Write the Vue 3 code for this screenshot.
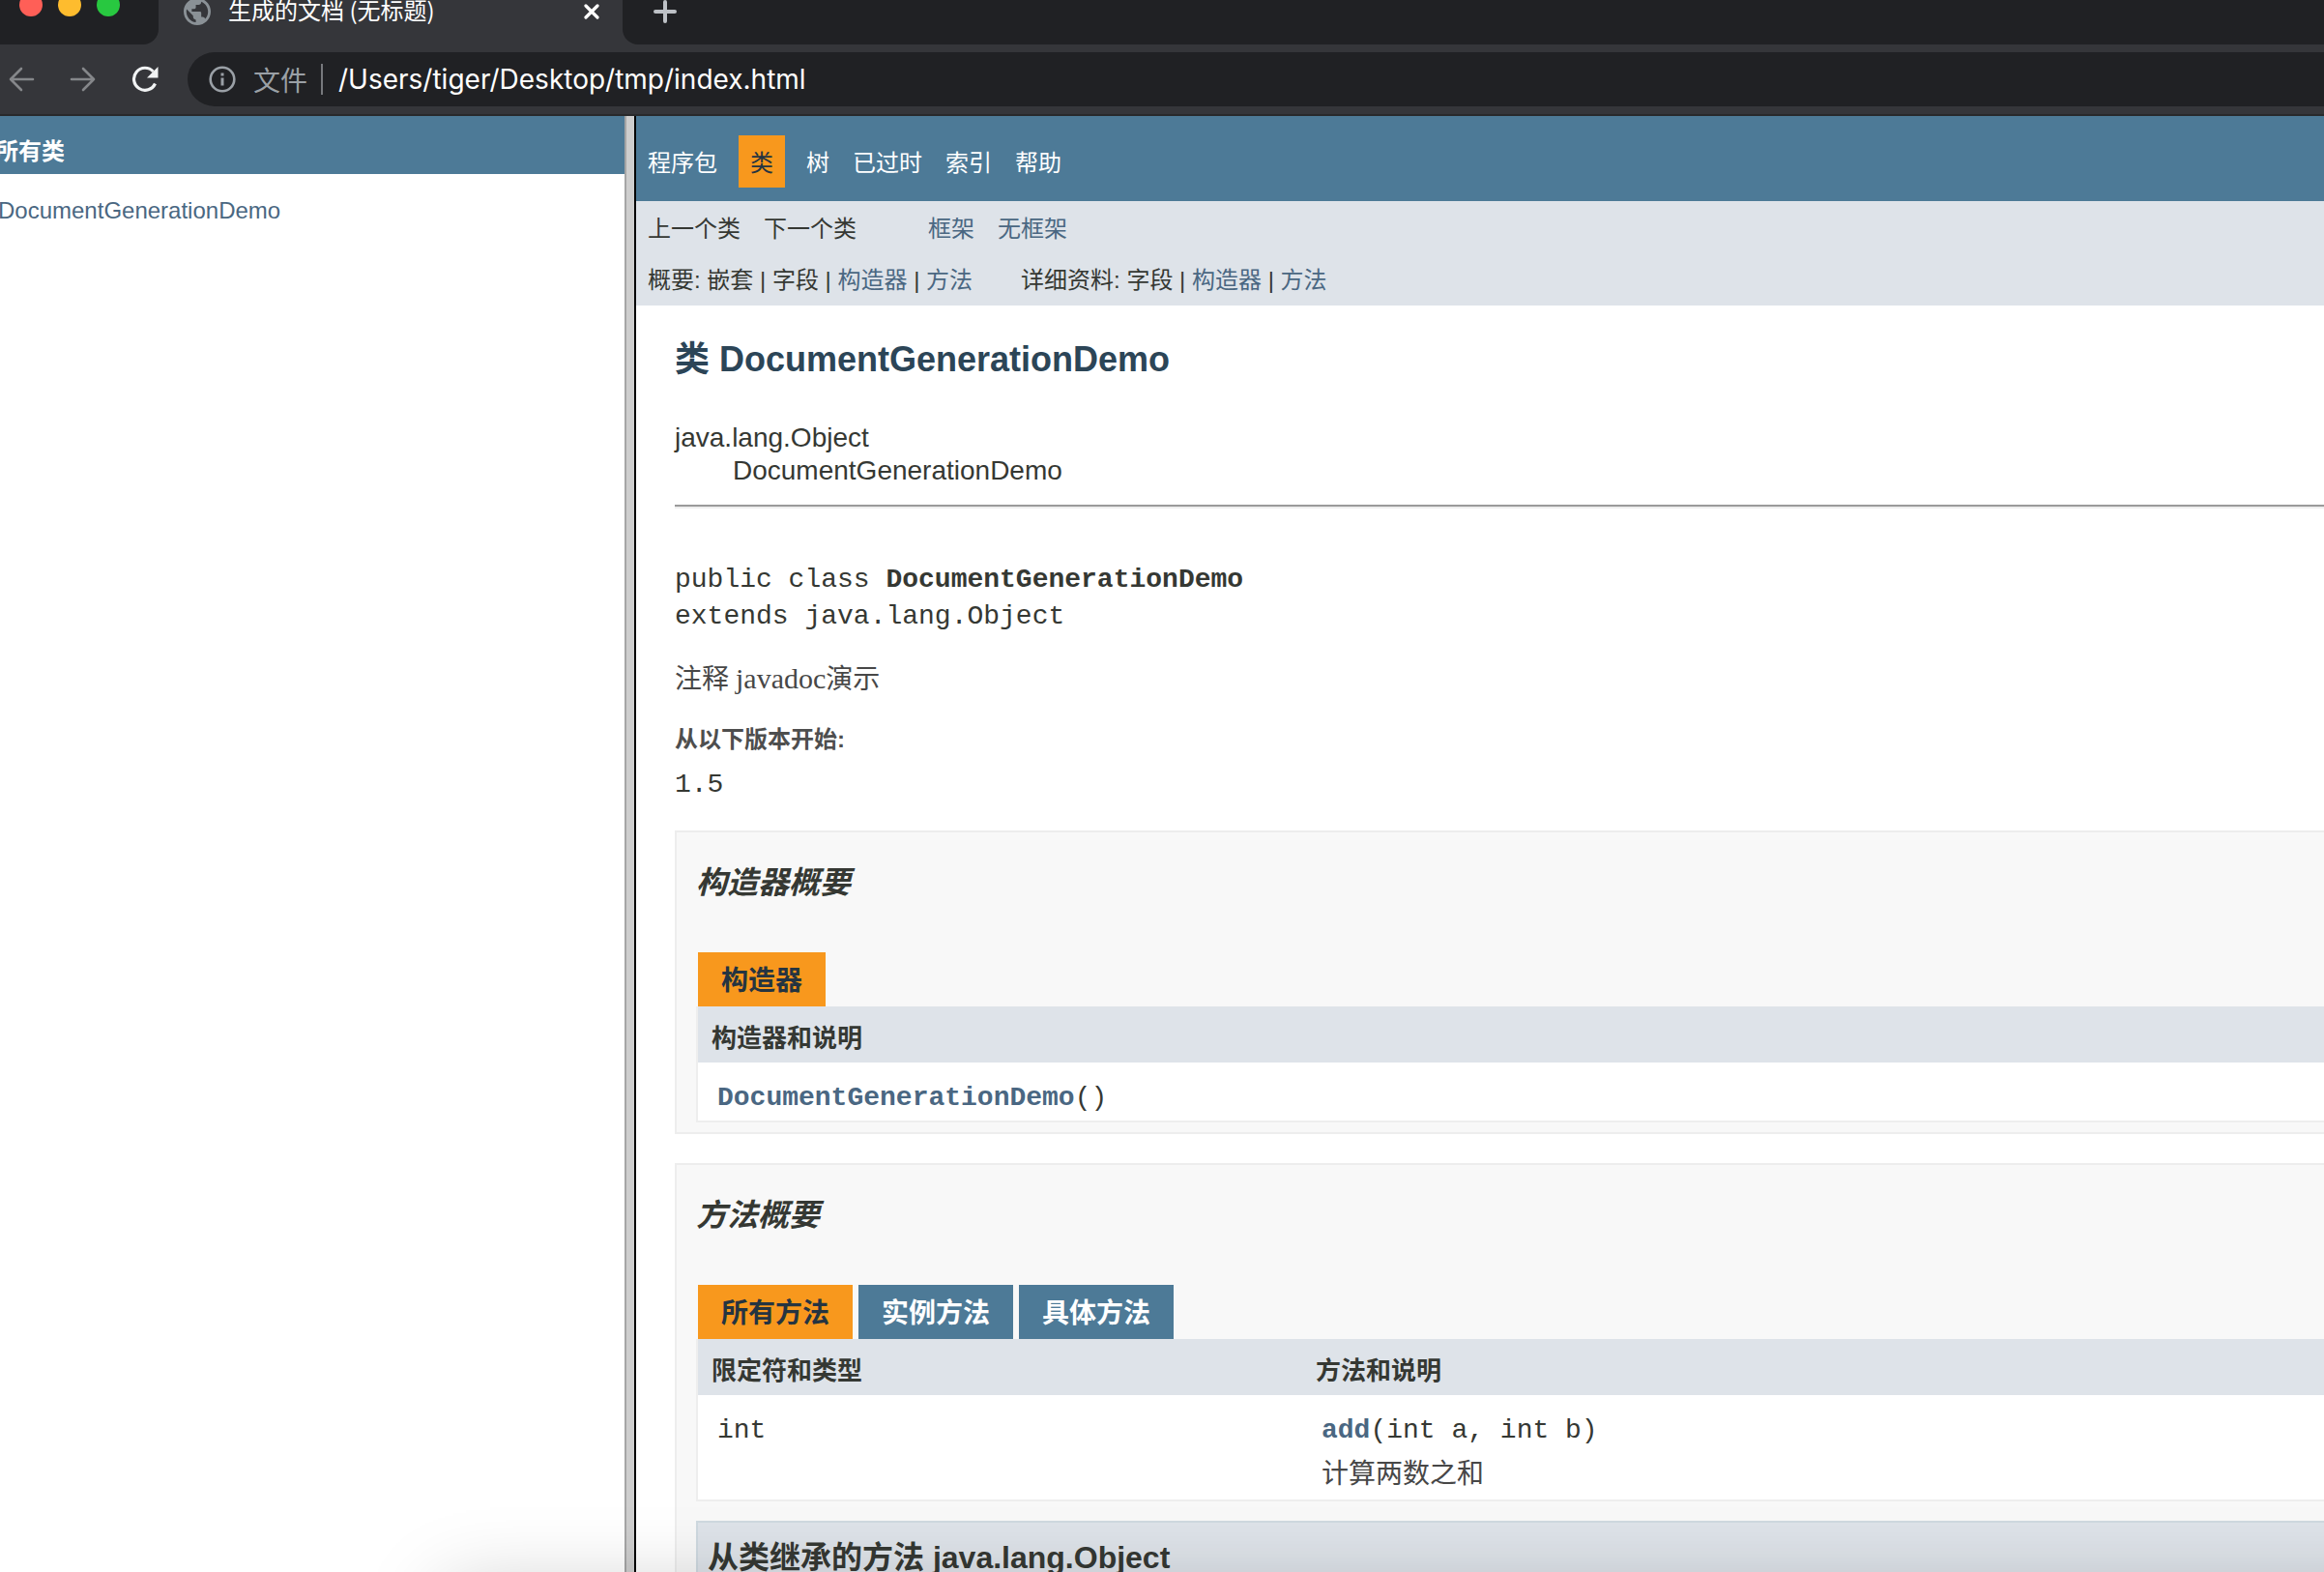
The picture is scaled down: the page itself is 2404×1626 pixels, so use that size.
<script setup>
import { ref } from 'vue'

const address = ref('/Users/tiger/Desktop/tmp/index.html')
const methodTabs = ['所有方法', '实例方法', '具体方法']
const activeTab = ref('所有方法')
const mainNav = ['程序包', '类', '树', '已过时', '索引', '帮助']
</script>

<template>
  <div class="window">
    <header class="chrome">
      <div class="tab-strip">
        <div class="lights">
          <button class="light red" aria-label="关闭窗口"></button>
          <button class="light yellow" aria-label="最小化"></button>
          <button class="light green" aria-label="全屏"></button>
        </div>
        <div class="tab">
          <svg class="globe" viewBox="2 2 20 20" width="28" height="28" fill="#8a9196">
            <path d="M12 2C6.48 2 2 6.48 2 12s4.48 10 10 10 10-4.48 10-10S17.52 2 12 2zM4 12c0-.61.08-1.21.21-1.78L8.99 15v1c0 1.1.9 2 2 2v1.93C7.06 19.43 4 16.07 4 12zm13.89 5.4c-.26-.81-1-1.4-1.9-1.4h-1v-3c0-.55-.45-1-1-1h-6v-2h2c.55 0 1-.45 1-1V7h2c1.100 0 2-.9 2-2v-.41C17.920 5.770 20 8.650 20 12c0 2.080-.81 3.980-2.110 5.400z" />
          </svg>
          <span class="tab-title">生成的文档 (无标题)</span>
          <button class="icon-button" aria-label="关闭标签页">
            <svg viewBox="0 0 16 16" width="16" height="16" stroke="#fff" stroke-width="3.200" stroke-linecap="round"><path d="M2 2l12 12M14 2L2 14" /></svg>
          </button>
        </div>
        <div class="strip-rest">
          <button class="icon-button" aria-label="新标签页">
            <svg viewBox="0 0 24 24" width="24" height="24" stroke="#bdc1c6" stroke-width="4" stroke-linecap="round"><path d="M12 2v20M2 12h20" /></svg>
          </button>
        </div>
      </div>
      <div class="toolbar">
        <button class="icon-button" aria-label="后退">
          <svg viewBox="0 0 28 28" width="28" height="28" fill="none" stroke="#85878a" stroke-width="2.600" stroke-linecap="round" stroke-linejoin="round"><path d="M26 14H3M14 3L3 14l11 11" /></svg>
        </button>
        <button class="icon-button" aria-label="前进">
          <svg viewBox="0 0 28 28" width="28" height="28" fill="none" stroke="#85878a" stroke-width="2.600" stroke-linecap="round" stroke-linejoin="round"><path d="M2 14h23M14 3l11 11-11 11" /></svg>
        </button>
        <button class="icon-button" aria-label="重新加载">
          <svg viewBox="0 0 28 28" width="28" height="28"><path d="M24.500 18.500A11.500 11.500 0 1 1 22.500 6" fill="none" stroke="#f1f3f4" stroke-width="3.200" /><path d="M27.500 1v11.500H16z" fill="#f1f3f4" /></svg>
        </button>
        <div class="omnibox">
          <svg viewBox="0 0 28 28" width="28" height="28"><circle cx="14" cy="14" r="12.300" fill="none" stroke="#9aa0a6" stroke-width="2.600" /><path d="M12.500 7.500h3v3h-3zM12.500 12.500h3v8h-3z" fill="#9aa0a6" /></svg>
          <label for="address">文件</label>
          <span class="divider"></span>
          <input id="address" v-model="address" type="text" spellcheck="false" />
        </div>
      </div>
    </header>

    <div class="frames">
      <aside class="classes">
        <h2>所有类</h2>
        <a href="#demo">DocumentGenerationDemo</a>
      </aside>
      <div class="splitter"></div>

      <main class="doc">
        <nav class="top-nav">
          <template v-for="item in mainNav" :key="item">
            <span v-if="item === '类'" class="current">{{ item }}</span>
            <a v-else href="#nav">{{ item }}</a>
          </template>
        </nav>
        <div class="sub-nav">
          <div class="sub-row">
            <span>上一个类</span>
            <span>下一个类</span>
            <a class="apart" href="#frames">框架</a>
            <a href="#noframes">无框架</a>
          </div>
          <div class="sub-row wide">
            <p>概要: 嵌套 | 字段 | <a href="#ctor">构造器</a> | <a href="#method">方法</a></p>
            <p>详细资料: 字段 | <a href="#ctor">构造器</a> | <a href="#method">方法</a></p>
          </div>
        </div>

        <article id="demo" class="content">
          <h1>类 DocumentGenerationDemo</h1>
          <ul class="inheritance">
            <li>java.lang.Object</li>
            <li class="child">DocumentGenerationDemo</li>
          </ul>
          <hr />
          <pre class="signature">public class <strong>DocumentGenerationDemo</strong>
extends java.lang.Object</pre>
          <p class="block">注释 <span class="latin">javadoc</span>演示</p>
          <dl>
            <dt>从以下版本开始:</dt>
            <dd>1.5</dd>
          </dl>

          <section id="ctor" class="summary">
            <h3>构造器概要</h3>
            <table>
              <caption><span class="cap active">构造器</span></caption>
              <thead>
                <tr><th scope="col">构造器和说明</th></tr>
              </thead>
              <tbody>
                <tr><td><code><a href="#demo">DocumentGenerationDemo</a>()</code></td></tr>
              </tbody>
            </table>
          </section>

          <section id="method" class="summary">
            <h3>方法概要</h3>
            <table>
              <caption>
                <div class="caps">
                  <button
                    v-for="tab in methodTabs"
                    :key="tab"
                    class="cap"
                    :class="{ active: tab === activeTab }"
                    @click="activeTab = tab"
                  >{{ tab }}</button>
                </div>
              </caption>
              <thead>
                <tr>
                  <th class="type" scope="col">限定符和类型</th>
                  <th scope="col">方法和说明</th>
                </tr>
              </thead>
              <tbody>
                <tr>
                  <td><code>int</code></td>
                  <td>
                    <code><a href="#add">add</a>(int a, int b)</code>
                    <p class="note">计算两数之和</p>
                  </td>
                </tr>
              </tbody>
            </table>
            <h4>从类继承的方法 java.lang.Object</h4>
          </section>
        </article>
      </main>
    </div>
    <div class="window-shadow"></div>
  </div>
</template>

<style>
body {
  margin: 0;
  background: #fff;
}
</style>

<style scoped>
.window {
  position: relative;
  display: flex;
  flex-direction: column;
  height: 100vh;
  overflow: hidden;
  color: #353833;
  font-family: "Liberation Sans", Arial, "Noto Sans CJK SC", sans-serif;
  font-size: 24px;
}
button {
  padding: 0;
  border: 0;
  background: none;
  font: inherit;
}
h1, h2, h3, h4, p, ul, dl, dd, pre {
  margin: 0;
}
a {
  color: #4a6782;
  text-decoration: none;
}

/* Browser chrome */
.chrome {
  flex: none;
  background: #35363a;
  border-bottom: 2px solid #28292b;
}
.tab-strip {
  display: flex;
  height: 46px;
}
.lights {
  box-sizing: border-box;
  display: flex;
  gap: 16px;
  width: 164px;
  padding-left: 20px;
  background: #202124;
  border-bottom-right-radius: 16px;
}
.light {
  width: 24px;
  height: 24px;
  margin-top: -7px;
  border-radius: 50%;
}
.red { background: #ff5f57; }
.yellow { background: #febc2e; }
.green { background: #28c840; }
.tab {
  box-sizing: border-box;
  display: flex;
  align-items: center;
  width: 480px;
  height: 24px;
  padding: 0 24px 0 26px;
}
.globe {
  flex: none;
}
.tab-title {
  flex: 1;
  margin-left: 18px;
  padding-bottom: 4px;
  color: #fff;
  font-family: "Noto Sans CJK SC", sans-serif;
  line-height: 24px;
  white-space: nowrap;
}
.icon-button {
  display: flex;
  flex: none;
}
.strip-rest {
  flex: 1;
  padding-left: 32px;
  background: #202124;
  border-bottom-left-radius: 16px;
}
.toolbar {
  display: flex;
  align-items: center;
  gap: 36px;
  height: 72px;
  padding-left: 8px;
}
.omnibox {
  flex: 1;
  display: flex;
  align-items: center;
  height: 56px;
  margin-left: -6px;
  padding-left: 22px;
  background: #202124;
  border-radius: 28px 0 0 28px;
}
.omnibox label {
  margin-left: 18px;
  color: #9aa0a6;
  font-family: "Noto Sans CJK SC", sans-serif;
  font-size: 28px;
  line-height: 32px;
}
.divider {
  width: 2px;
  height: 32px;
  margin: 0 16px 0 14px;
  background: #77797d;
}
.omnibox input {
  flex: 1;
  padding: 0;
  border: 0;
  outline: 0;
  background: none;
  color: #fff;
  font-family: Inter, sans-serif;
  font-size: 28px;
  line-height: 36px;
}

/* Frameset */
.frames {
  flex: 1;
  display: flex;
  min-height: 0;
  background: #fff;
}
.classes {
  flex: none;
  width: 646px;
}
.classes h2 {
  padding: 22px 0 8px;
  background: #4d7a97;
  color: #fff;
  font-size: 24px;
  line-height: 30px;
  text-indent: -5px;
}
.classes a {
  display: block;
  margin: 22px 0 0 -2px;
  line-height: 32px;
}
.splitter {
  flex: none;
  width: 8px;
  border-left: 2px solid #a5a5a5;
  border-right: 2px solid #000;
  background: #cecece;
}
.doc {
  flex: 1;
  min-width: 0;
}
.top-nav {
  display: flex;
  align-items: flex-start;
  gap: 24px;
  padding: 20px 12px 14px;
  background: #4d7a97;
  line-height: 50px;
}
.top-nav a {
  padding-top: 4px;
  color: #fff;
}
.top-nav .current {
  margin: 0 -2px;
  padding: 4px 12px 0;
  background: #f8981d;
  color: #253441;
}
.sub-nav {
  padding: 2px 12px 0;
  background: #dee3e9;
}
.sub-row {
  display: flex;
  gap: 24px;
  line-height: 54px;
}
.sub-row.wide {
  gap: 50px;
  line-height: 52px;
}
.apart {
  margin-left: 50px;
}

/* Class description */
.content {
  padding: 34px 0 0 40px;
}
h1 {
  color: #2c4557;
  font-size: 36px;
  line-height: 44px;
}
.inheritance {
  margin-top: 42px;
  padding: 0;
  font-size: 28px;
  line-height: 34px;
  list-style: none;
}
.child {
  padding-left: 60px;
}
hr {
  margin: 18px 0 55px;
  border: 0;
  border-top: 2px solid #9a9a9a;
  border-bottom: 2px solid #eee;
}
.signature,
code,
dd {
  font-family: "Liberation Mono", "Courier New", monospace;
  font-size: 28px;
}
.signature {
  line-height: 38px;
}
.block {
  margin-top: 28px;
  color: #474747;
  font-family: "Liberation Serif", "Noto Sans CJK SC", serif;
  font-size: 28px;
  line-height: 34px;
}
.latin {
  font-size: 30px;
}
dt {
  margin-top: 28px;
  color: #4e4e4e;
  font-weight: bold;
  line-height: 34px;
}
dd {
  margin-top: 13px;
  line-height: 34px;
}

/* Summary sections */
.summary {
  margin-top: 30px;
  padding: 32px 0 10px 20px;
  border: 2px solid #ededed;
  border-right: 0;
  background: #f8f8f8;
}
h3 {
  margin-bottom: 52px;
  font-size: 32px;
  font-style: italic;
  line-height: 40px;
}
table {
  width: 100%;
  border-collapse: separate;
  border-spacing: 0;
}
caption {
  padding-left: 2px;
  text-align: left;
}
.caps {
  display: flex;
  gap: 6px;
}
.cap {
  display: block;
  width: max-content;
  padding: 4px 24px 0;
  background: #4d7a97;
  color: #fff;
  font-size: 28px;
  font-weight: bold;
  line-height: 52px;
}
.cap.active {
  background: #f8981d;
  color: #253441;
}
th {
  padding: 20px 14px 12px;
  background: #dee3e9;
  font-size: 26px;
  line-height: 26px;
  text-align: left;
}
td {
  padding: 19px 20px 5px;
  border-bottom: 2px solid #eee;
  background: #fff;
  vertical-align: top;
}
th:first-child,
td:first-child {
  border-left: 2px solid #eee;
}
.type {
  width: 597px;
}
code {
  display: block;
  line-height: 36px;
}
code a {
  font-weight: bold;
}
.note {
  margin-top: 6px;
  color: #474747;
  font-family: "Liberation Serif", "Noto Sans CJK SC", serif;
  font-size: 28px;
  line-height: 42px;
}
h4 {
  margin-top: 20px;
  padding: 16px 10px 10px;
  border: 2px solid #cfd9e0;
  border-right: 0;
  background: #dee3e9;
  font-size: 32px;
  line-height: 40px;
}

/* Shadow cast by the window in front */
.window-shadow {
  position: absolute;
  top: calc(100% + 20px);
  right: -100px;
  left: 460px;
  height: 400px;
  box-shadow: 0 0 80px rgba(0, 0, 0, 0.22);
  pointer-events: none;
}
</style>
